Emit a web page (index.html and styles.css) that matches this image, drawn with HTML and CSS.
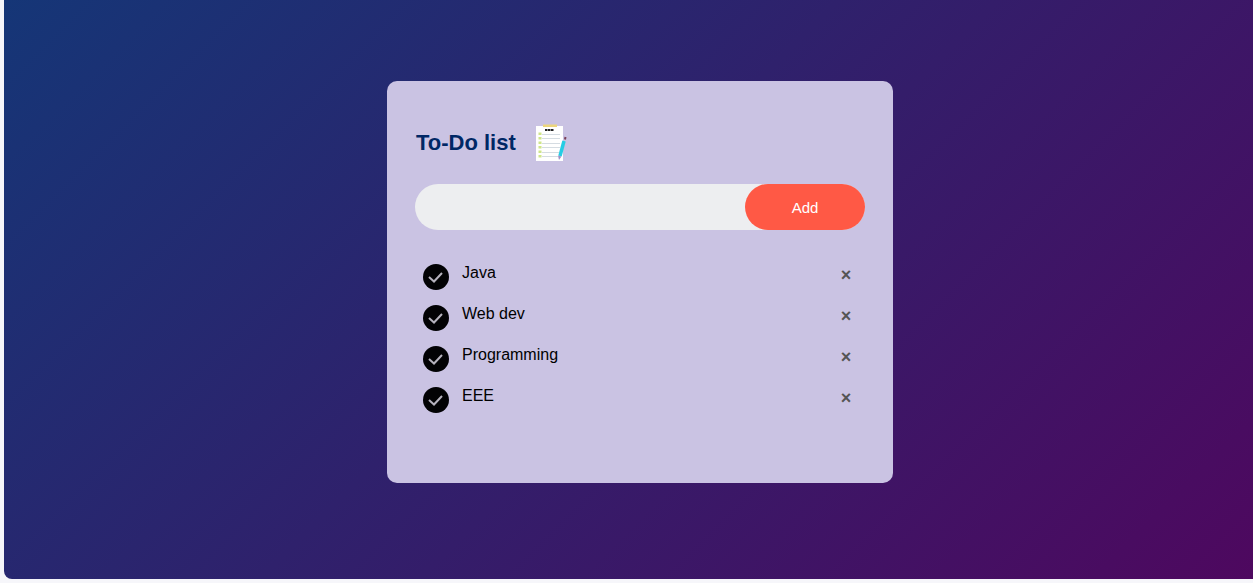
FILE: index.html
```html
<!DOCTYPE html>
<html lang="en">
<head>
<meta charset="utf-8">
<meta name="viewport" content="width=device-width, initial-scale=1">
<title>To-Do list</title>
<link rel="stylesheet" href="styles.css">
</head>
<body>
<main class="page">
  <section class="card">
    <h1 class="title">To-Do list
      <svg class="title-icon" viewBox="0 0 32 38" aria-hidden="true">
        <path fill="#fff" d="M1 2h27v35H1z"/>
        <path fill="#ecd57c" d="M8 .5h14v2.500H8z"/>
        <path stroke="#222" stroke-width="2" stroke-dasharray="2 .5 3 .5" d="M10 6h9"/>
        <path stroke="#d5dce2" d="M7 10.500h18M7 14.500h18M7 19.500h18M7 23.500h18M7 28.500h17M7 32.500h16"/>
        <path stroke="#cfe58a" stroke-width="3" stroke-dasharray="2.500 2" d="M5 8.500v27"/>
        <path stroke="#25cde4" stroke-width="3.500" d="M29 17l-4 15"/>
        <path stroke="#7b4058" stroke-width="2" d="M30.500 13l-.5 2.500"/>
        <path fill="#9c8fc4" d="M23 31.500l3.400.9L24 36z"/>
      </svg>
    </h1>
    <form class="entry">
      <input class="entry-text" type="text" aria-label="New task">
      <button class="entry-add" type="button">Add</button>
    </form>
    <ul class="tasks">
      <li class="task">
        <label class="task-label"><span class="tick"><input class="tick-box" type="checkbox" checked><svg class="tick-mark" viewBox="0 0 26 26" aria-hidden="true"><path d="M6 13l5 4.500L19 9"/></svg></span><span class="task-name">Java</span></label>
        <button class="remove" type="button" aria-label="Remove Java">×</button>
      </li>
      <li class="task">
        <label class="task-label"><span class="tick"><input class="tick-box" type="checkbox" checked><svg class="tick-mark" viewBox="0 0 26 26" aria-hidden="true"><path d="M6 13l5 4.500L19 9"/></svg></span><span class="task-name">Web dev</span></label>
        <button class="remove" type="button" aria-label="Remove Web dev">×</button>
      </li>
      <li class="task">
        <label class="task-label"><span class="tick"><input class="tick-box" type="checkbox" checked><svg class="tick-mark" viewBox="0 0 26 26" aria-hidden="true"><path d="M6 13l5 4.500L19 9"/></svg></span><span class="task-name">Programming</span></label>
        <button class="remove" type="button" aria-label="Remove Programming">×</button>
      </li>
      <li class="task">
        <label class="task-label"><span class="tick"><input class="tick-box" type="checkbox" checked><svg class="tick-mark" viewBox="0 0 26 26" aria-hidden="true"><path d="M6 13l5 4.500L19 9"/></svg></span><span class="task-name">EEE</span></label>
        <button class="remove" type="button" aria-label="Remove EEE">×</button>
      </li>
    </ul>
  </section>
</main>
</body>
</html>
```
FILE: styles.css
```css
* {
  box-sizing: border-box;
}

body {
  display: flex;
  min-height: 100vh;
  margin: 0;
  padding: 0 0 4px 4px;
  background: #f6f6fa;
  font-family: "Liberation Sans", Arial, sans-serif;
}

.page {
  flex: 1;
  padding: 81px 0 81px 23px;
  border-bottom-left-radius: 8px;
  background: linear-gradient(135deg, #153677, #4e085f);
}

.card {
  width: 100%;
  max-width: 506px;
  margin: 0 auto;
  padding: 43px 28px 70px;
  border-radius: 10px;
  background: #cac3e3;
}

.title {
  display: flex;
  align-items: center;
  gap: 19px;
  margin: 0 0 22px;
  padding-left: 1px;
  color: #002765;
  font-size: 22px;
  line-height: 26px;
}

.title-icon {
  width: 32px;
  height: 38px;
  fill: none;
}

.entry {
  display: flex;
  border-radius: 24px;
  background: #edeef0;
}

.entry-text {
  flex: 1;
  min-width: 0;
  padding: 0 20px;
  border: 0;
  outline: 0;
  background: transparent;
  font: inherit;
}

.entry-add {
  width: 120px;
  height: 46px;
  border: 0;
  border-radius: 24px;
  background: #ff5945;
  color: #fff;
  font: 15px "Liberation Sans", Arial, sans-serif;
  cursor: pointer;
}

.tasks {
  display: grid;
  gap: 15px;
  margin: 0;
  padding: 34px 8px 0;
  list-style: none;
}

.task {
  display: flex;
  align-items: flex-start;
}

.task-label {
  display: flex;
  flex: 1;
  gap: 13px;
  font-size: 16px;
  line-height: 18px;
}

.tick {
  display: grid;
}

.tick-box,
.tick-mark {
  grid-area: 1 / 1;
  width: 26px;
  height: 26px;
  margin: 0;
}

.tick-box {
  appearance: none;
  border-radius: 50%;
  background: #020204;
}

.tick-mark {
  fill: none;
  stroke: #b5b2bd;
  stroke-width: 2;
  pointer-events: none;
}

.remove {
  width: 22px;
  height: 22px;
  padding: 0;
  border: 0;
  background: transparent;
  color: #555;
  font: bold 18px/22px "Liberation Sans", Arial, sans-serif;
  cursor: pointer;
}
```
